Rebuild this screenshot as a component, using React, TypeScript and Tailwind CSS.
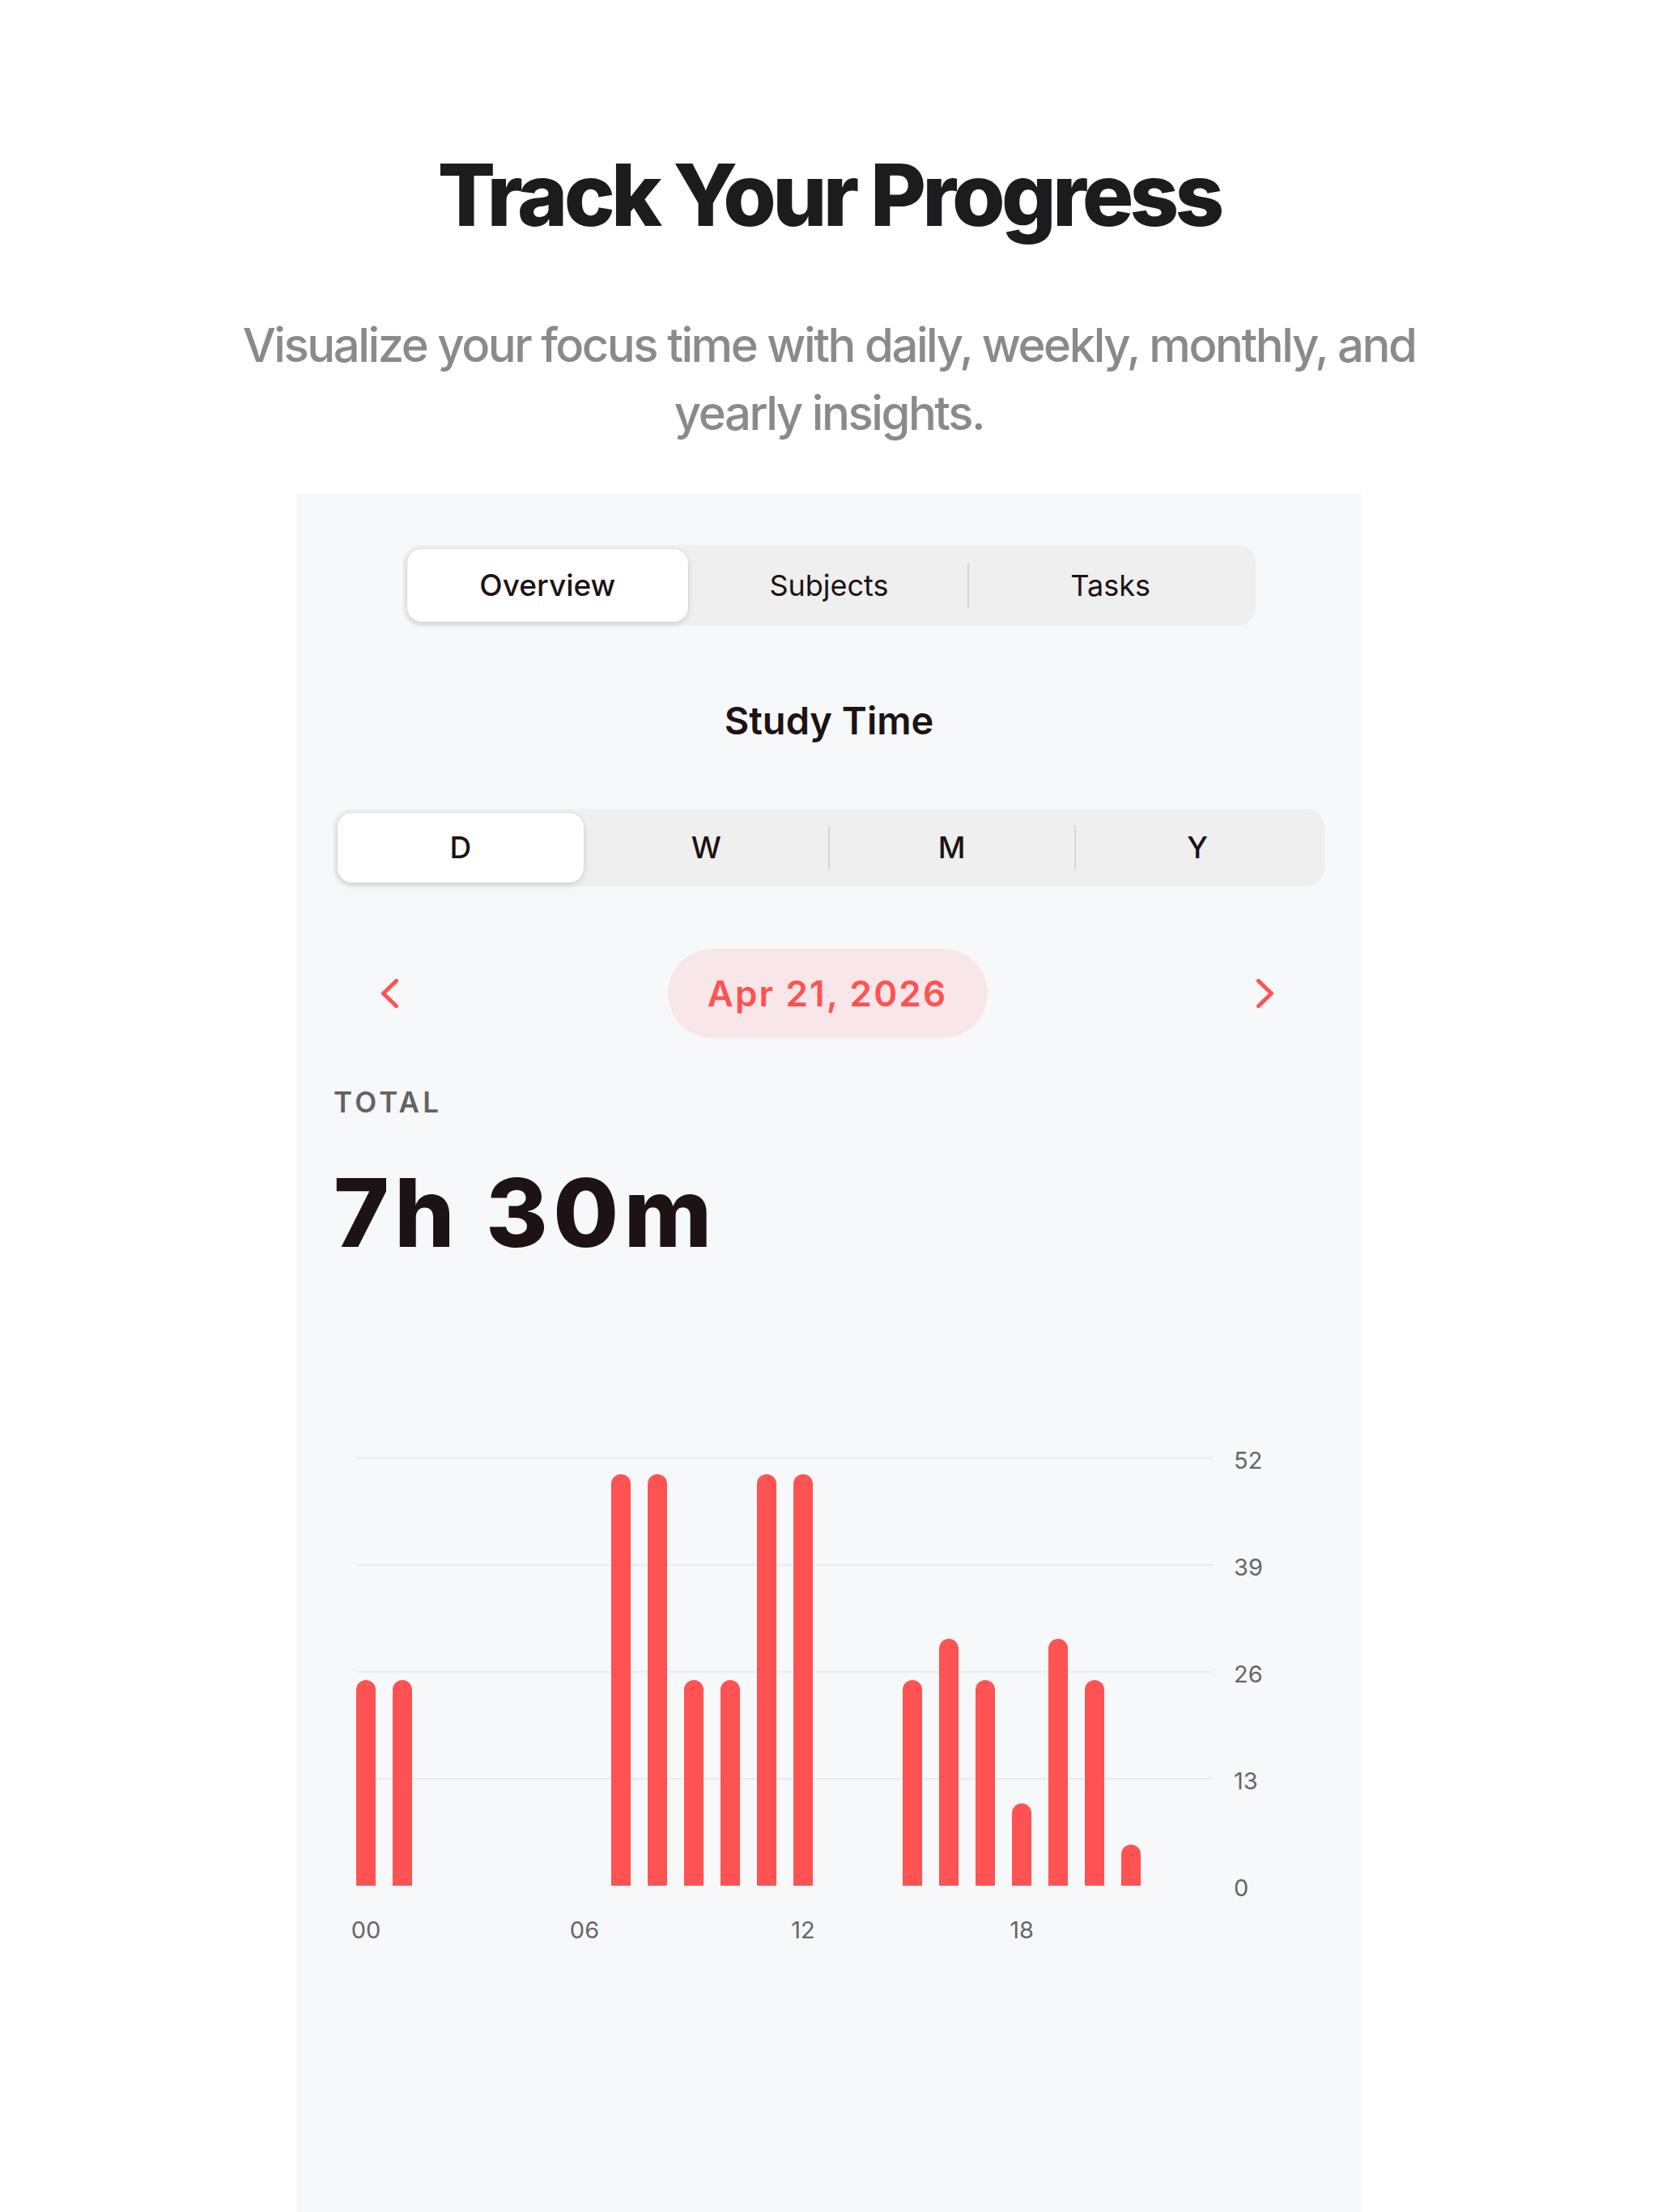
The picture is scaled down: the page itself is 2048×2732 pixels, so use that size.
import React from 'react';

const RED = '#ff5252';

// minutes studied per hour of the day
const HOURS: number[] = [
  25, 25, 0, 0, 0, 0, 0, 50, 50, 25, 25, 50, 50, 0, 0, 25, 30, 25, 10, 30, 25, 5, 0, 0,
];

const GRID = [52, 39, 26, 13];
const X_LABELS = [
  { h: 0, t: '00' },
  { h: 6, t: '06' },
  { h: 12, t: '12' },
  { h: 18, t: '18' },
];

function Chevron({ dir }: { dir: 'left' | 'right' }) {
  return (
    <svg width="24" height="36" viewBox="0 0 24 36" fill="none">
      <path
        d={dir === 'left' ? 'M19.5 2.5 L3.5 18 L19.5 33.5' : 'M4.5 2.5 L20.5 18 L4.5 33.5'}
        stroke={RED}
        strokeWidth="5"
        strokeLinecap="round"
        strokeLinejoin="round"
      />
    </svg>
  );
}

function HourlyChart() {
  const base = 550;
  const top = 21.5;
  const unit = (base - top) / 52;
  const left = 28;
  const step = 45;
  const w = 24;

  return (
    <svg width="1224" height="640" viewBox="0 0 1224 640" className="block">
      {GRID.map((g) => {
        const y = base - g * unit;
        return (
          <g key={g}>
            <line x1={left} x2={1086} y1={y} y2={y} stroke="#ebebeb" strokeWidth="2" />
            <text x={1112} y={y + 13} fontSize="29" fill="#666668" fontFamily="Inter, sans-serif">
              {g}
            </text>
          </g>
        );
      })}
      <text x={1112} y={base + 13} fontSize="29" fill="#666668" fontFamily="Inter, sans-serif">
        0
      </text>

      {HOURS.map((v, h) => {
        if (!v) return null;
        const x = left + h * step;
        const t = base - v * unit;
        const r = 12;
        return (
          <path
            key={h}
            d={`M${x} ${base} V${t + r} A${r} ${r} 0 0 1 ${x + w} ${t + r} V${base} Z`}
            fill={RED}
          />
        );
      })}

      {X_LABELS.map((l) => (
        <text
          key={l.t}
          x={left + l.h * step + w / 2}
          y={615}
          fontSize="29"
          fill="#666668"
          textAnchor="middle"
          fontFamily="Inter, sans-serif"
        >
          {l.t}
        </text>
      ))}
    </svg>
  );
}

export default function App() {
  return (
    <div
      className="min-h-[2732px] bg-white flex flex-col items-center"
      style={{ fontFamily: 'Inter, "Noto Sans", sans-serif' }}
    >
      <h1 className="pt-[188px] text-[106px] leading-none font-extrabold tracking-[-0.045em] text-[#1c1c1e]">
        Track Your Progress
      </h1>
      <p className="mt-[90px] w-[1500px] text-center text-[58px] leading-[84px] font-medium tracking-[-0.042em] text-[#8a8a8e]">
        Visualize your focus time with daily, weekly, monthly, and yearly insights.
      </p>

      <div className="mt-[58px] w-[1316px] flex-1 bg-[#f7f8fa] px-[46px] pt-[63px] flex flex-col items-center">
        {/* page tabs */}
        <div className="w-[1053px] h-[100px] rounded-[22px] bg-[#eeefee] p-[5px] grid grid-cols-3 items-center">
          <div className="h-full rounded-[18px] bg-white shadow-[0_3px_8px_rgba(0,0,0,0.12),0_0_0_1px_rgba(0,0,0,0.04)] flex items-center justify-center text-[37px] font-medium text-[#1d1314]">
            Overview
          </div>
          <div className="h-full flex items-center justify-center text-[36px] text-[#1d1314]">Subjects</div>
          <div className="h-full relative flex items-center justify-center text-[36px] text-[#1d1314]">
            <span className="absolute left-[-3px] top-[17px] bottom-[17px] w-[2px] bg-[#d6d6d6]" />
            Tasks
          </div>
        </div>

        <h2 className="mt-[93px] text-[47px] leading-none font-semibold text-[#1d1314]">Study Time</h2>

        {/* range picker */}
        <div className="mt-[86px] w-full h-[96px] rounded-[22px] bg-[#eeefee] p-[5px] grid grid-cols-4 items-center">
          <div className="h-full rounded-[18px] bg-white shadow-[0_3px_8px_rgba(0,0,0,0.12),0_0_0_1px_rgba(0,0,0,0.04)] flex items-center justify-center text-[37px] font-medium text-[#1d1314]">
            D
          </div>
          <div className="h-full flex items-center justify-center text-[37px] font-medium text-[#1d1314]">W</div>
          <div className="h-full relative flex items-center justify-center text-[37px] font-medium text-[#1d1314]">
            <span className="absolute left-[-1px] top-[16px] bottom-[16px] w-[2px] bg-[#d6d6d6]" />
            M
          </div>
          <div className="h-full relative flex items-center justify-center text-[37px] font-medium text-[#1d1314]">
            <span className="absolute left-[-1px] top-[16px] bottom-[16px] w-[2px] bg-[#d6d6d6]" />
            Y
          </div>
        </div>

        {/* date stepper */}
        <div className="mt-[77px] w-full pl-[58px] pr-[62px] flex items-center justify-between">
          <Chevron dir="left" />
          <div className="w-[395px] h-[110px] rounded-full bg-[#f9e6e8] flex items-center justify-center text-[44px] font-semibold tracking-[0.05em] text-[#ff5252]">
            Apr 21, 2026
          </div>
          <Chevron dir="right" />
        </div>

        <div className="w-full mt-[62px]">
          <div className="text-[35px] leading-none font-semibold tracking-[0.12em] text-[#636366]">TOTAL</div>
          <div className="mt-[60px] text-[117px] leading-none font-extrabold tracking-[0.055em] text-[#1d1314]">
            7h 30m
          </div>
        </div>

        <div className="mt-[223px] w-full">
          <HourlyChart />
        </div>
      </div>
    </div>
  );
}
